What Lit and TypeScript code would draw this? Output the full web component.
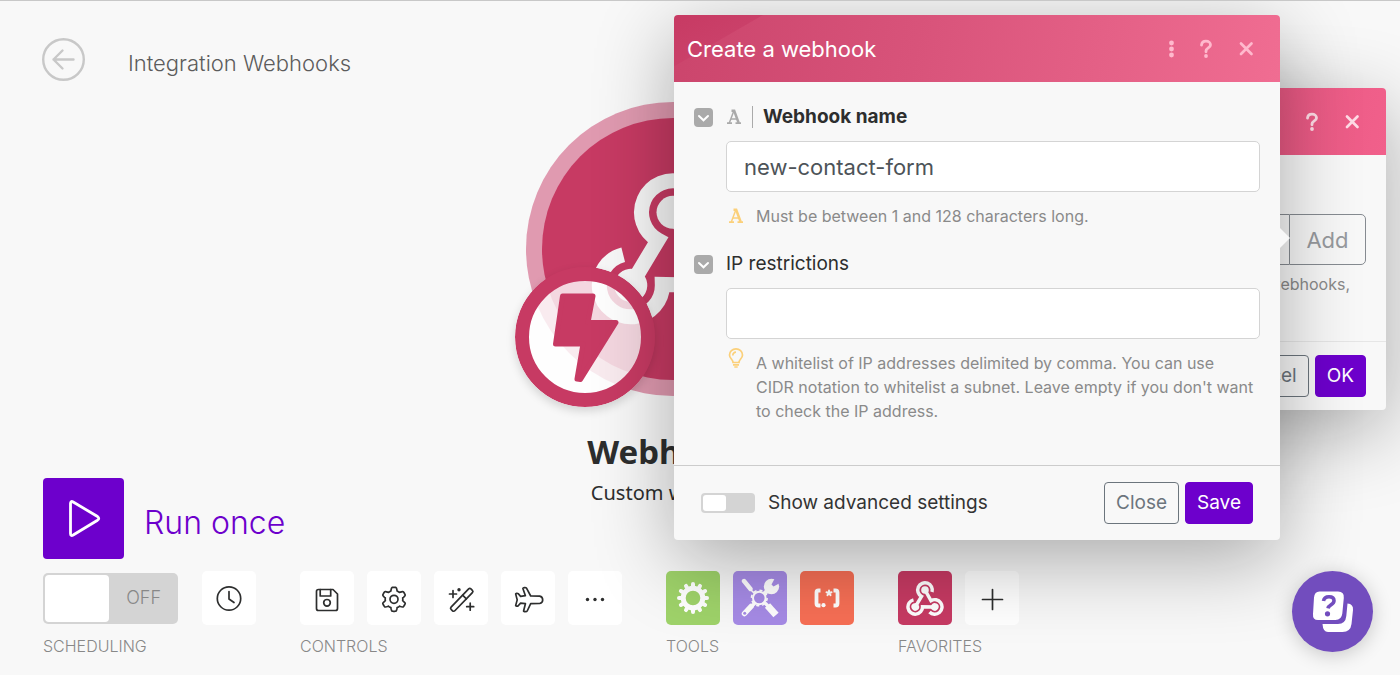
import { LitElement, html, svg, css } from "lit";
import { customElement, state } from "lit/decorators.js";

const spokes = (count: number) => Array.from({ length: count }, (_, i) => (360 / count) * i);

/* Outline of a cog with soft, rounded teeth. */
const cogOutline = (cx: number, cy: number, teeth: number, inner: number, outer: number) => {
  const steps = 120;
  const points: string[] = [];
  for (let i = 0; i < steps; i++) {
    const a = (i / steps) * Math.PI * 2 - Math.PI / 2;
    const wave = Math.max(-1, Math.min(1, Math.cos((a + Math.PI / 2) * teeth) * 1.9 + 0.1));
    const r = (inner + outer) / 2 + (wave * (outer - inner)) / 2;
    points.push(`${(cx + r * Math.cos(a)).toFixed(2)} ${(cy + r * Math.sin(a)).toFixed(2)}`);
  }
  return `M${points.join("L")}Z`;
};

/* One third of the webhook mark: dot, open ring and arm. */
const hookPart = (angle: number) => svg`
  <g transform="rotate(${angle})">
    <circle cx="0" cy="-48.7" r="16.5" fill="currentColor"></circle>
    <path d="M-42.2 24.3L-15 -21A31.5 31.5 0 1 1 30.3 -40" fill="none" stroke="currentColor" stroke-width="15"></path>
  </g>`;

const webhookIcon = html`
  <svg class="hook" viewBox="-82 -92 164 160" aria-hidden="true">${[0, 120, 240].map(hookPart)}</svg>`;

const line32 = (content: unknown) => html`
  <svg class="line-icon" viewBox="0 0 32 32" width="32" height="32" aria-hidden="true">${content}</svg>`;

const icons = {
  clock: line32(svg`<circle cx="16" cy="16.5" r="11.7"></circle><path d="M16 9.5v7.5l5 3.5"></path>`),
  save: line32(svg`
    <path d="M7.500 7.500h14.500l4.500 4.500v14.500a2 2 0 0 1-2 2H7.500a2 2 0 0 1-2-2v-17a2 2 0 0 1 2-2z"></path>
    <path d="M9.200 7.500v6.500h10.500v-6.500"></path><circle cx="16" cy="20.800" r="3.300"></circle>`),
  settings: line32(svg`
    <path d=${cogOutline(16, 17.3, 6, 8.8, 12)}></path><circle cx="16" cy="17.300" r="4"></circle>`),
  wand: line32(svg`
    <g transform="rotate(-46 16.700 17.900)"><rect x="2.500" y="15.300" width="28.500" height="5.200" rx="1.600"></rect><path d="M20.700 15.300v5.200"></path></g>
    <path d="M8 8.500v7M4.500 12h7M25.200 21.200v7M21.700 24.700h7"></path>
    <circle class="solid" cx="14" cy="7.800" r="1.700"></circle>`),
  plane: line32(svg`
    <path d="M18.700 14l9 .2c2 .4 3 2 3 3.800s-1 3-3 3.500l-9 .2-3.500 7.300c-.4.900-3.800.9-3.600 0l1.800-7.300-4.800-.6-2.400 2.700c-.7.600-2.700.5-2.500-.4l1.500-5.500-1.500-5.800c-.2-.9 1.800-1 2.500-.4l2.400 2.600 4.800-.6-2.500-7.200c-.2-1 3-1.300 3.600-.4z"></path>`),
  more: line32(svg`
    <g class="solid"><circle cx="8.500" cy="17.500" r="1.700"></circle><circle cx="16" cy="17.500" r="1.700"></circle><circle cx="23.500" cy="17.500" r="1.700"></circle></g>`),
  plus: line32(svg`<path d="M16.500 7.500v20M6.500 17.500h20"></path>`),
};

const gearIcon = html`
  <svg viewBox="-20 -20 40 40" width="40" height="40" aria-hidden="true">
    <circle r="9.800" fill="none" stroke="currentColor" stroke-width="5"></circle>
    ${spokes(12).map((a) => svg`<path transform="rotate(${a})" d="M0 -11V-14" stroke="currentColor" stroke-width="4" stroke-linecap="round"></path>`)}
  </svg>`;

const toolsIcon = html`
  <svg viewBox="-20 -20 40 40" width="40" height="40" aria-hidden="true">
    <g fill="none" stroke="currentColor">
      <path d="M-16 -17L-9.500 -9" stroke-width="4.400" stroke-linecap="round"></path>
      <path d="M-11 -10L-5 -4" stroke-width="1.600"></path>
      <path d="M7.500 7.500L16 17" stroke-width="7"></path>
      <path d="M4 4L8 8" stroke-width="3.400"></path>
      <path d="M-5 5L-9 9" stroke-width="3.400"></path>
      <path d="M-9 8.500L-15.500 15.500" stroke-width="5.500" stroke-linecap="round"></path>
      <path d="M4 -4L9 -9" stroke-width="4.500"></path>
      <circle cx="-0.700" cy="0" r="6.300" stroke-width="2"></circle>
      <circle cx="-0.700" cy="0" r="7.800" stroke-width="1.600" stroke-dasharray="3.060 3.060"></circle>
    </g>
    <circle cx="11.500" cy="-11.500" r="7.700" fill="currentColor"></circle>
    <path d="M11.500 -13.500L15.500 -21L21 -15.500L13.500 -11.500Z" fill="#a68be6"></path>
    <circle cx="-15.300" cy="15.300" r="1.500" fill="#a68be6"></circle>
  </svg>`;

const patternIcon = html`
  <svg viewBox="-20 -20 40 40" width="40" height="40" aria-hidden="true">
    <path d="M-6.500 -7.500H-8.500Q-10.500 -7.500 -10.500 -5.500V5.500Q-10.500 7.500 -8.500 7.500H-6.500M6.500 -7.500H8.500Q10.500 -7.500 10.500 -5.500V5.500Q10.500 7.500 8.500 7.500H6.500" fill="none" stroke="currentColor" stroke-width="3.800"></path>
    <circle cx="-3.500" cy="7.200" r="2.100" fill="currentColor"></circle>
    ${spokes(5).map((a) => svg`<path transform="translate(2 -5) rotate(${a})" d="M0 0V-2.600" stroke="currentColor" stroke-width="2" stroke-linecap="round"></path>`)}
  </svg>`;

const questionIcon = html`
  <svg viewBox="0 0 20 20" width="20" height="20" aria-hidden="true">
    <path d="M5.500 6.200C5.700 3.800 7.400 2.200 10 2.200s4.500 1.500 4.500 3.700c0 3-4.500 3-4.500 6.100v.8" fill="none" stroke="currentColor" stroke-width="2.800" stroke-linecap="round"></path>
    <circle cx="10" cy="17" r="1.900" fill="currentColor"></circle>
  </svg>`;

const closeIcon = html`
  <svg viewBox="0 0 20 20" width="20" height="20" aria-hidden="true">
    <path d="M5 4.500l10.500 10.500M15.500 4.500L5 15" stroke="currentColor" stroke-width="2.700" stroke-linecap="round"></path>
  </svg>`;

const dotsIcon = html`
  <svg viewBox="0 0 20 20" width="20" height="20" fill="currentColor" aria-hidden="true">
    <circle cx="10.500" cy="4" r="2.400"></circle><circle cx="10.500" cy="10" r="2.400"></circle><circle cx="10.500" cy="16" r="2.400"></circle>
  </svg>`;

const textTypeIcon = html`
  <svg viewBox="0 0 16 16" width="16" height="16" aria-hidden="true">
    <g fill="none" stroke="currentColor"><path d="M5.500 1.700H8.200L12.700 14" stroke-width="2.500"></path><path d="M7.600 2.500L3.300 14" stroke-width="1.500"></path><path d="M5 10h6M1 14.200h5M9.500 14.200h5.500" stroke-width="1.700"></path></g>
  </svg>`;

const bulbIcon = html`
  <svg viewBox="0 0 16 20" width="16" height="20" aria-hidden="true">
    <g fill="none" stroke="currentColor" stroke-width="1.700">
      <path d="M5 14.500C5 11.500 1.500 10.500 1.500 7A6.500 6.100 0 0 1 14.500 7C14.500 10.500 11 11.500 11 14.500Z"></path>
      <path d="M4.800 7.500A3.200 3.200 0 0 1 8 4.200M5 16.800H11M6.300 19H9.700"></path>
    </g>
  </svg>`;

@customElement("app-root")
export class AppRoot extends LitElement {
  @state() private scheduling = false;
  @state() private advanced = false;

  static styles = css`
    :host {
      display: block;
      font-family: Inter, "Liberation Sans", sans-serif;
      color: #333;
    }
    * { box-sizing: border-box; }
    button, input { font: inherit; color: inherit; margin: 0; }
    button { padding: 0; border: 0; background: none; cursor: pointer; }
    h1, h2, p { margin: 0; font-weight: inherit; }
    svg { display: block; flex: none; }

    .page {
      position: relative;
      display: flex;
      flex-direction: column;
      min-height: 100vh;
      overflow: hidden;
      background: #f8f8f8;
      border-top: 1px solid #c8c8c8;
    }
    .top {
      display: flex;
      align-items: center;
      gap: 43px;
      padding: 37px 42px 0;
    }
    .back { color: #c8c8c8; border-radius: 50%; }
    .title { font-size: 22px; line-height: 28px; font-weight: 300; color: #5c5c5c; padding-top: 6px; }
    .canvas { flex: 1; }

    .node {
      position: absolute;
      left: calc(50% - 27px);
      top: 101px;
      transform: translateX(-50%);
      display: flex;
      flex-direction: column;
      align-items: center;
      font-family: "Noto Sans", "Open Sans", sans-serif;
      color: #2d2e2e;
      white-space: nowrap;
    }
    .node-name { font-size: 33px; line-height: 44px; font-weight: 700; margin-top: 34px; }
    .node-kind { font-size: 20px; line-height: 28px; margin-top: 5px; }
    .bubble {
      width: 294px;
      height: 294px;
      padding: 16px;
      border-radius: 50%;
      background: #e09ab0;
    }
    .bubble-core {
      display: flex;
      align-items: center;
      justify-content: center;
      height: 100%;
      border-radius: 50%;
      background: #c73a63;
      color: #f8f8f8;
    }
    .bubble .hook { width: 164px; height: 160px; }
    .trigger { position: absolute; left: -11px; top: 165px; border-radius: 50%; box-shadow: 0 4px 10px rgba(0, 0, 0, 0.15); }

    .dock { display: flex; flex-direction: column; gap: 12px; padding: 0 43px 17px; }
    .run { display: flex; align-items: center; gap: 20px; align-self: flex-start; color: #6d00cc; }
    .run-tile {
      display: flex;
      align-items: center;
      justify-content: center;
      width: 81px;
      height: 81px;
      border-radius: 4px;
      background: #6d00cc;
      color: #fff;
    }
    .run-text { font-size: 32px; line-height: 40px; font-weight: 300; padding-top: 8px; }
    .groups { display: flex; gap: 44px; }
    .group { display: flex; flex-direction: column; gap: 9px; }
    .row { display: flex; align-items: center; gap: 13px; }
    .row-wide { gap: 24px; }
    .caption { font-size: 16px; line-height: 24px; font-weight: 300; color: #888; }
    .tile {
      display: flex;
      align-items: center;
      justify-content: center;
      width: 54px;
      height: 54px;
      border-radius: 5px;
      background: #fff;
      color: #2d2e2e;
    }
    .tile-green { background: #9fd36a; color: #fff; }
    .tile-violet { background: #a68be6; color: #fff; }
    .tile-orange { background: #f76f55; color: #fff; }
    .tile-hook { background: #c73a63; color: #fff; }
    .tile .hook { width: 38px; height: 37px; }
    .line-icon { fill: none; stroke: currentColor; stroke-width: 1.7; stroke-linecap: round; stroke-linejoin: round; }
    .line-icon .solid { fill: currentColor; stroke: none; }

    .switch { display: grid; align-items: center; cursor: pointer; }
    .switch > * { grid-area: 1 / 1; }
    .switch-text { justify-self: end; padding-right: 17px; font-size: 18px; line-height: 24px; font-weight: 300; color: #888; z-index: 1; }
    .toggle {
      appearance: none;
      display: flex;
      width: 135px;
      height: 51px;
      padding: 2px;
      border-radius: 5px;
      background: #d4d4d4;
      cursor: pointer;
    }
    .toggle::before { content: ""; width: 64px; border-radius: 4px; background: #fff; }
    .toggle:checked { justify-content: flex-end; }
    .toggle-small { width: 54px; height: 20px; border-radius: 4px; }
    .toggle-small::before { width: 23px; border-radius: 3px; }

    .dialog {
      position: absolute;
      width: 606px;
      max-width: 90vw;
      border-radius: 4px;
      background: #f8f8f8;
      box-shadow: 0 20px 80px rgba(0, 0, 0, 0.32);
    }
    .dialog-front { top: 14px; right: 120px; }
    .dialog-back { top: 87px; right: 14px; }
    .dialog-front::after {
      content: "";
      position: absolute;
      left: 100%;
      top: 213px;
      width: 10px;
      height: 20px;
      background: #f8f8f8;
      clip-path: polygon(0 0, 100% 50%, 0 100%);
    }
    .head {
      display: flex;
      align-items: center;
      height: 67px;
      padding: 0 24px 0 13px;
      border-radius: 4px 4px 0 0;
      background:
        linear-gradient(150deg, #c73a63, #ca4069 44px, transparent 45px),
        linear-gradient(100deg, #cb456c, #d8537a 40%, #f06d92);
      color: #fff;
    }
    .head-back { background: linear-gradient(100deg, #c73a63, #f1608b); }
    .heading { flex: 1; font-size: 22px; line-height: 28px; }
    .actions { display: flex; align-items: center; gap: 20px; color: #ffb9cd; }
    .head-back .actions { color: #ffdce6; }
    .actions button:first-child:nth-last-child(3) { margin-right: -5px; }

    .body { display: flex; flex-direction: column; gap: 24px; padding: 23px 20px 42px; }
    .field { display: grid; grid-template-columns: 19px minmax(0, 1fr); column-gap: 13px; row-gap: 12px; align-items: center; }
    .fold { width: 19px; height: 19px; border-radius: 4px; background: #aaa; color: #fff; }
    .label { display: flex; align-items: center; gap: 10px; font-size: 19px; line-height: 24px; color: #2d2e2e; }
    .label-strong { font-weight: 700; }
    .mark { color: #aaa; display: flex; padding-right: 10px; border-right: 1px solid #aaa; height: 22px; align-items: center; }
    .text {
      grid-column: 2;
      width: 100%;
      height: 51px;
      padding: 0 17px;
      border: 1px solid #d4d4d4;
      border-radius: 5px;
      background: #fff;
      font-size: 22px;
      color: #4d5358;
      outline: none;
    }
    .hint { grid-column: 2; display: grid; grid-template-columns: 16px minmax(0, 1fr); column-gap: 12px; padding: 0 6px 0 2px; font-size: 16px; line-height: 24px; color: #8a8a8a; }
    .hint-mark { color: #fbd07a; height: 24px; display: flex; align-items: center; }
    .hint-mark-high { align-items: flex-start; margin-top: -3px; }

    .foot {
      display: flex;
      align-items: center;
      gap: 6px;
      padding: 16px 27px;
      border-top: 1px solid #ccc;
      font-size: 19px;
      line-height: 24px;
    }
    .foot-back { padding: 13px 20px; justify-content: flex-end; border-color: #e6e6e6; }
    .advanced { flex: 1; display: flex; align-items: center; gap: 13px; cursor: pointer; }
    .btn { height: 42px; padding: 0 11px; border: 1px solid #6c757d; border-radius: 4px; color: #6c757d; background: #f8f8f8; }
    .btn-main { border-color: #6d00cc; background: #6d00cc; color: #fff; }

    .back-body { display: flex; flex-direction: column; gap: 7px; padding: 59px 20px 45px; }
    .picker { display: flex; }
    .picker-text { flex: 1; min-width: 0; height: 51px; border: 1px solid #868b91; border-right: 0; border-radius: 5px 0 0 5px; background: #f8f8f8; }
    .picker-add { width: 77px; border: 1px solid #868b91; border-radius: 0 5px 5px 0; font-size: 22px; color: #979a9e; }
    .back-note { padding-right: 16px; text-align: right; font-size: 16px; line-height: 24px; color: #8a8a8a; }

    .help {
      position: absolute;
      right: 27px;
      bottom: 23px;
      display: flex;
      align-items: center;
      justify-content: center;
      width: 81px;
      height: 81px;
      border-radius: 50%;
      background: #724dbe;
      box-shadow: 0 3px 20px rgba(0, 0, 0, 0.2);
    }
  `;

  private tile(label: string, icon: unknown, kind = "") {
    return html`<button class="tile ${kind}" aria-label=${label}>${icon}</button>`;
  }

  private foldButton(label: string) {
    return html`
      <button class="fold" aria-label=${label}>
        <svg viewBox="0 0 19 19" width="19" height="19" aria-hidden="true">
          <path d="M5 8l4.500 4.300L14 8" fill="none" stroke="currentColor" stroke-width="2" stroke-linecap="round"></path>
        </svg>
      </button>`;
  }

  private renderNode() {
    return html`
      <section class="node">
        <div class="bubble"><div class="bubble-core">${webhookIcon}</div></div>
        <svg class="trigger" viewBox="-70 -70 140 140" width="140" height="140" aria-hidden="true">
          <circle r="63" fill="#fff" fill-opacity="0.8" stroke="#c73a63" stroke-width="14"></circle>
          <path d="M-22.500 -41H8L3 -14.500H31L-4.500 42.500L-8 42L-2 7H-29.500Z" fill="#c73a63" stroke="#c73a63" stroke-width="5" stroke-linejoin="round"></path>
        </svg>
        <h2 class="node-name">Webhooks</h2>
        <p class="node-kind">Custom webhook</p>
      </section>`;
  }

  private renderDock() {
    return html`
      <footer class="dock">
        <button class="run">
          <span class="run-tile">
            <svg viewBox="0 0 40 40" width="40" height="40" aria-hidden="true">
              <path d="M6.500 4.500Q6.500 1.500 9.200 3L33.500 17.500Q36 19.500 33.500 21.200L9.200 36Q6.500 37.500 6.500 34.500Z" fill="none" stroke="currentColor" stroke-width="2.800"></path>
            </svg>
          </span>
          <span class="run-text">Run once</span>
        </button>
        <div class="groups">
          <div class="group">
            <div class="row row-wide">
              <label class="switch">
                <input class="toggle" type="checkbox" aria-label="Scheduling" .checked=${this.scheduling}
                  @change=${(e: Event) => (this.scheduling = (e.target as HTMLInputElement).checked)} />
                <span class="switch-text">${this.scheduling ? "ON" : "OFF"}</span>
              </label>
              ${this.tile("Schedule", icons.clock)}
            </div>
            <span class="caption">SCHEDULING</span>
          </div>
          <div class="group">
            <div class="row">
              ${this.tile("Save", icons.save)} ${this.tile("Settings", icons.settings)}
              ${this.tile("Auto-align", icons.wand)} ${this.tile("Explain flow", icons.plane)}
              ${this.tile("More", icons.more)}
            </div>
            <span class="caption">CONTROLS</span>
          </div>
          <div class="group">
            <div class="row">
              ${this.tile("Flow control", gearIcon, "tile-green")}
              ${this.tile("Tools", toolsIcon, "tile-violet")}
              ${this.tile("Text parser", patternIcon, "tile-orange")}
            </div>
            <span class="caption">TOOLS</span>
          </div>
          <div class="group">
            <div class="row">
              ${this.tile("Webhooks", webhookIcon, "tile-hook")} ${this.tile("Add favorite", icons.plus)}
            </div>
            <span class="caption">FAVORITES</span>
          </div>
        </div>
      </footer>`;
  }

  private renderBackDialog() {
    return html`
      <section class="dialog dialog-back" aria-label="Webhooks">
        <header class="head head-back">
          <span class="heading"></span>
          <div class="actions">
            <button aria-label="Help">${questionIcon}</button>
            <button aria-label="Close">${closeIcon}</button>
          </div>
        </header>
        <div class="back-body">
          <div class="picker">
            <input class="picker-text" aria-label="Webhook" />
            <button class="picker-add">Add</button>
          </div>
          <p class="back-note">webhooks,</p>
        </div>
        <footer class="foot foot-back">
          <button class="btn">Cancel</button>
          <button class="btn btn-main">OK</button>
        </footer>
      </section>`;
  }

  private renderFrontDialog() {
    return html`
      <section class="dialog dialog-front" aria-labelledby="dialog-title">
        <header class="head">
          <h2 class="heading" id="dialog-title">Create a webhook</h2>
          <div class="actions">
            <button aria-label="More">${dotsIcon}</button>
            <button aria-label="Help">${questionIcon}</button>
            <button aria-label="Close">${closeIcon}</button>
          </div>
        </header>
        <div class="body">
          <div class="field">
            ${this.foldButton("Collapse webhook name")}
            <label class="label label-strong" for="name"><span class="mark">${textTypeIcon}</span>Webhook name</label>
            <input class="text" id="name" type="text" value="new-contact-form" />
            <div class="hint">
              <span class="hint-mark">${textTypeIcon}</span>
              <p>Must be between 1 and 128 characters long.</p>
            </div>
          </div>
          <div class="field">
            ${this.foldButton("Collapse IP restrictions")}
            <label class="label" for="ip">IP restrictions</label>
            <input class="text" id="ip" type="text" />
            <div class="hint">
              <span class="hint-mark hint-mark-high">${bulbIcon}</span>
              <p>A whitelist of IP addresses delimited by comma. You can use CIDR notation to whitelist a subnet. Leave empty if you don't want to check the IP address.</p>
            </div>
          </div>
        </div>
        <footer class="foot">
          <label class="advanced">
            <input class="toggle toggle-small" type="checkbox" .checked=${this.advanced}
              @change=${(e: Event) => (this.advanced = (e.target as HTMLInputElement).checked)} />
            Show advanced settings
          </label>
          <button class="btn">Close</button>
          <button class="btn btn-main">Save</button>
        </footer>
      </section>`;
  }

  render() {
    return html`
      <main class="page">
        <header class="top">
          <button class="back" aria-label="Back">
            <svg viewBox="0 0 43 43" width="43" height="43" aria-hidden="true">
              <g fill="none" stroke="currentColor" stroke-width="2.400" stroke-linecap="round" stroke-linejoin="round">
                <circle cx="21.500" cy="21.500" r="20.300"></circle>
                <path d="M31.500 21.500H11.500M20.500 12.500L11.500 21.500L20.500 30.500"></path>
              </g>
            </svg>
          </button>
          <h1 class="title">Integration Webhooks</h1>
        </header>
        <div class="canvas">${this.renderNode()}</div>
        ${this.renderDock()}
        ${this.renderBackDialog()}
        ${this.renderFrontDialog()}
        <button class="help" aria-label="Help">
          <svg viewBox="0 0 44 44" width="44" height="44" aria-hidden="true">
            <path d="M8.500 1.500H27Q33.500 1.500 32.800 8L31.300 23.500Q30.500 30 24.500 30H7Q1.500 30 2 24L3 7.500Q3.500 1.500 8.500 1.500Z" fill="#fff"></path>
            <path d="M36.500 13.500Q42.500 14 42 20L40.500 34Q39.500 42 31.500 42H17Q12 42 11.500 34H27Q34.500 34 35.300 26Z" fill="#fff"></path>
            <path d="M12.500 11C13 8 15.200 6.800 18 6.800s5 1.300 5 4c0 4-5.300 3.700-6 7.500" fill="none" stroke="#724dbe" stroke-width="3.600"></path>
            <circle cx="16.500" cy="23.800" r="2.600" fill="#724dbe"></circle>
          </svg>
        </button>
      </main>`;
  }
}
